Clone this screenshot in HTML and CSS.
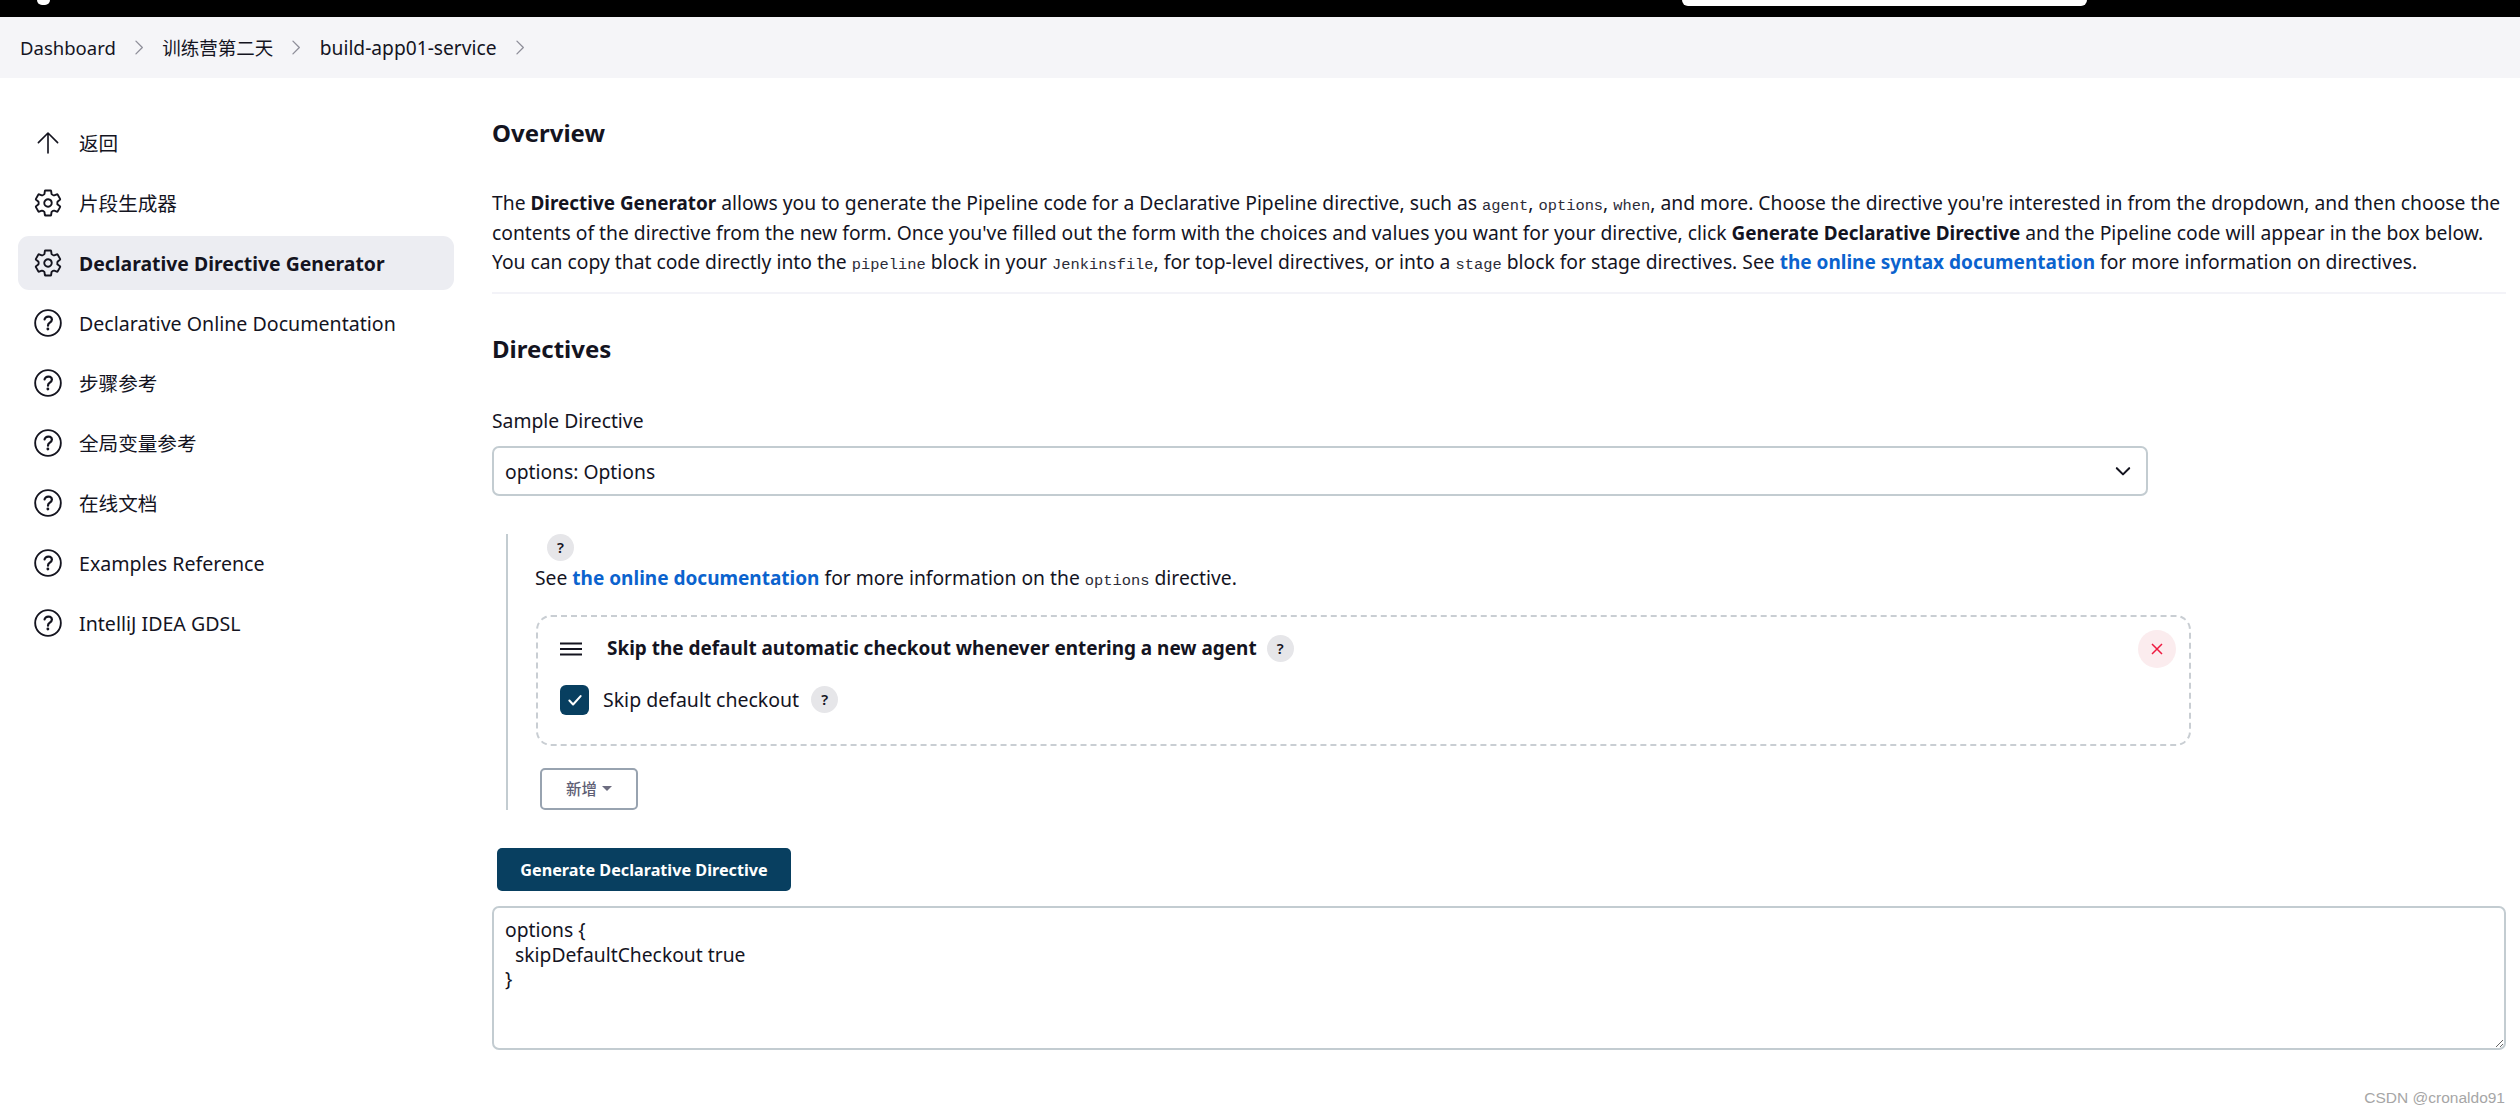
FILE: index.html
```html
<!DOCTYPE html>
<html lang="zh-CN">
<head>
<meta charset="utf-8">
<title>Declarative Directive Generator</title>
<link rel="stylesheet" href="styles.css">
</head>
<body>
<svg class="defs" width="0" height="0" aria-hidden="true">
  <symbol id="i-help" viewBox="0 0 512 512">
    <circle cx="256" cy="256" r="219" fill="none" stroke="currentColor" stroke-width="32"/>
    <g transform="translate(256 256) scale(1.12) translate(-252 -256)">
      <path d="M200 202.29s.84-17.5 19.57-32.57C230.68 160.77 244 158.18 256 158c10.93-.14 20.69 1.67 26.53 4.45 10 4.76 29.47 16.38 29.47 41.09 0 26-17 37.81-36.37 50.8S252 281.43 252 296" fill="none" stroke="currentColor" stroke-linecap="round" stroke-width="34"/>
      <circle cx="250" cy="348" r="22" fill="currentColor"/>
    </g>
  </symbol>
  <symbol id="i-gear" viewBox="0 0 512 512">
    <path fill="none" stroke="currentColor" stroke-width="32" stroke-linecap="round" stroke-linejoin="round" d="M262.29 192.31a64 64 0 1057.4 57.4 64.13 64.13 0 00-57.4-57.4zM416.39 256a154.34 154.34 0 01-1.53 20.79l45.21 35.46a10.81 10.81 0 012.45 13.75l-42.77 74a10.81 10.81 0 01-13.14 4.59l-44.9-18.08a16.11 16.11 0 00-15.17 1.75A164.48 164.48 0 01325 400.8a15.94 15.94 0 00-8.82 12.14l-6.73 47.89a11.08 11.08 0 01-10.68 9.17h-85.54a11.11 11.11 0 01-10.69-8.87l-6.72-47.82a16.07 16.07 0 00-9-12.22 155.3 155.3 0 01-21.46-12.57 16 16 0 00-15.11-1.71l-44.89 18.07a10.81 10.81 0 01-13.14-4.58l-42.77-74a10.8 10.8 0 012.45-13.75l38.21-30a16.05 16.05 0 006-14.08c-.36-4.17-.58-8.33-.58-12.5s.21-8.27.58-12.35a16 16 0 00-6.07-13.94l-38.19-30A10.81 10.81 0 0149.48 186l42.77-74a10.81 10.81 0 0113.14-4.59l44.9 18.08a16.11 16.11 0 0015.17-1.75A164.48 164.48 0 01187 111.2a15.94 15.94 0 008.82-12.14l6.73-47.89A11.08 11.08 0 01213.23 42h85.54a11.11 11.11 0 0110.69 8.87l6.72 47.82a16.07 16.07 0 009 12.22 155.3 155.3 0 0121.46 12.57 16 16 0 0015.11 1.71l44.89-18.07a10.81 10.81 0 0113.14 4.58l42.77 74a10.8 10.8 0 01-2.45 13.75l-38.21 30a16.05 16.05 0 00-6.05 14.08c.33 4.14.55 8.3.55 12.47z"/>
  </symbol>
  <symbol id="i-up" viewBox="0 0 512 512">
    <path fill="none" stroke="currentColor" stroke-width="28" stroke-linecap="round" stroke-linejoin="round" d="M92 250L256 86l164 164M256 90v336"/>
  </symbol>
  <symbol id="i-chev" viewBox="0 0 24 24">
    <path fill="none" stroke="currentColor" stroke-width="1.8" stroke-linecap="round" stroke-linejoin="round" d="M7 3l9 9-9 9"/>
  </symbol>
</svg>

<header class="topbar">
  <span class="logo-stub"></span>
  <span class="search-stub"></span>
</header>

<nav class="crumbs">
  <a class="crumb">Dashboard</a>
  <svg class="crumb-sep"><use href="#i-chev"/></svg>
  <a class="crumb">训练营第二天</a>
  <svg class="crumb-sep"><use href="#i-chev"/></svg>
  <a class="crumb crumb-job">build-app01-service</a>
  <svg class="crumb-sep"><use href="#i-chev"/></svg>
</nav>

<div class="page">
  <aside class="sidebar">
    <a class="task"><svg class="task-icon"><use href="#i-up"/></svg><span>返回</span></a>
    <a class="task"><svg class="task-icon"><use href="#i-gear"/></svg><span>片段生成器</span></a>
    <a class="task task-active"><svg class="task-icon"><use href="#i-gear"/></svg><span>Declarative Directive Generator</span></a>
    <a class="task"><svg class="task-icon"><use href="#i-help"/></svg><span>Declarative Online Documentation</span></a>
    <a class="task"><svg class="task-icon"><use href="#i-help"/></svg><span>步骤参考</span></a>
    <a class="task"><svg class="task-icon"><use href="#i-help"/></svg><span>全局变量参考</span></a>
    <a class="task"><svg class="task-icon"><use href="#i-help"/></svg><span>在线文档</span></a>
    <a class="task"><svg class="task-icon"><use href="#i-help"/></svg><span>Examples Reference</span></a>
    <a class="task"><svg class="task-icon"><use href="#i-help"/></svg><span>IntelliJ IDEA GDSL</span></a>
  </aside>

  <main class="main">
    <h2 class="heading heading-overview">Overview</h2>
    <p class="intro">
      <span class="line">The <b>Directive Generator</b> allows you to generate the Pipeline code for a Declarative Pipeline directive, such as <code>agent</code>, <code>options</code>, <code>when</code>, and more. Choose the directive you're interested in from the dropdown, and then choose the</span>
      <span class="line">contents of the directive from the new form. Once you've filled out the form with the choices and values you want for your directive, click <b>Generate Declarative Directive</b> and the Pipeline code will appear in the box below.</span>
      <span class="line">You can copy that code directly into the <code>pipeline</code> block in your <code>Jenkinsfile</code>, for top-level directives, or into a <code>stage</code> block for stage directives. See <a class="link">the online syntax documentation</a> for more information on directives.</span>
    </p>
    <hr class="rule">
    <h2 class="heading heading-directives">Directives</h2>
    <label class="field-label" for="sample">Sample Directive</label>
    <div class="select-wrap">
      <select class="select" id="sample"><option>options: Options</option></select>
      <svg class="select-chev" viewBox="0 0 16 16"><path d="M2.5 5.5L8 11l5.5-5.5" fill="none" stroke="currentColor" stroke-width="1.8" stroke-linecap="round" stroke-linejoin="round"/></svg>
    </div>

    <section class="directive">
      <span class="help help-top">?</span>
      <p class="see">See <a class="link">the online documentation</a> for more information on the <code>options</code> directive.</p>
      <div class="chunk">
        <div class="chunk-head">
          <svg class="drag" viewBox="0 0 22 14"><path d="M0 1.5h22M0 7h22M0 12.5h22" stroke="currentColor" stroke-width="2.2"/></svg>
          <b class="chunk-title">Skip the default automatic checkout whenever entering a new agent</b>
          <span class="help">?</span>
          <span class="close"><svg viewBox="0 0 12 12"><path d="M1 1l10 10M11 1L1 11" stroke="currentColor" stroke-width="1.5"/></svg></span>
        </div>
        <div class="check-row">
          <span class="check"><svg viewBox="0 0 16 16"><path d="M3 8.5l3.3 3.5L13 4.5" fill="none" stroke="currentColor" stroke-width="1.8" stroke-linecap="round" stroke-linejoin="round"/></svg></span>
          <span class="check-label">Skip default checkout</span>
          <span class="help">?</span>
        </div>
      </div>
      <button class="add" type="button">新增<span class="caret"></span></button>
    </section>

    <button class="generate" type="button">Generate Declarative Directive</button>
    <textarea class="output" spellcheck="false">options {
  skipDefaultCheckout true
}</textarea>
  </main>
</div>
<span class="watermark">CSDN @cronaldo91</span>
</body>
</html>
```

FILE: styles.css
```css
* { box-sizing: border-box; }
html, body { margin: 0; padding: 0; height: 100%; overflow: hidden; }
body {
  background: #fff;
  color: #14141f;
  font-family: "Noto Sans", "Noto Sans CJK SC", sans-serif;
  font-size: 19.3px;
  line-height: 29.3px;
  position: relative;
}
.defs { position: absolute; }

.topbar {
  height: 17px;
  background: #000;
  display: flex;
  align-items: flex-start;
  padding-left: 37px;
}
.logo-stub {
  width: 13px;
  height: 5px;
  background: #fff;
  border-radius: 0 0 6px 6px;
}
.search-stub {
  margin-left: 1632px;
  width: 405px;
  height: 6px;
  background: #fff;
  border-radius: 0 0 8px 8px;
}

.crumbs {
  height: 61px;
  background: #f5f5f8;
  display: flex;
  align-items: center;
  padding-left: 20px;
  font-size: 18.5px;
}
.crumb { color: #14141f; }
.crumb-job { font-size: 19.2px; }
.crumb-sep { width: 17px; height: 17px; margin: 0 14.5px 0 15px; color: #8e8e99; }

.page { display: flex; gap: 38px; padding-right: 14px; }

.sidebar {
  width: 436px;
  flex: none;
  margin-left: 18px;
  padding-top: 38px;
  display: flex;
  flex-direction: column;
  gap: 6px;
  font-size: 19.6px;
}
.task {
  height: 54px;
  display: flex;
  align-items: center;
  gap: 16px;
  padding-left: 15px;
  border-radius: 11px;
}
.task span { padding-top: 1px; }
.task-icon { width: 30px; height: 30px; flex: none; }
.task-active { background: #ecedf2; font-weight: 700; font-size: 19.4px; }

.main { flex: 1; min-width: 0; }
.heading { margin: 0; font-size: 24px; line-height: 30px; font-weight: 700; }
.heading-overview { margin-top: 40px; }
.heading-directives { margin-top: 40px; }
.intro { margin: 40px 0 0; line-height: 29.5px; }
.line { display: block; white-space: nowrap; }
b { font-weight: 700; font-size: 18.9px; line-height: 1; }
code {
  font-family: "Liberation Mono", monospace;
  font-size: 15.4px;
  line-height: 1;
  color: #2c2c38;
}
.link { color: #0b63ce; font-weight: 700; font-size: 19px; line-height: 1; }
.rule { margin: 15.5px 0 0; height: 2px; border: 0; background: #f3f3f8; }
.field-label { display: block; margin-top: 42px; }

.select-wrap { position: relative; width: 1656px; margin-top: 11px; }
.select {
  display: block;
  width: 100%;
  height: 50px;
  padding: 0 11px;
  appearance: none;
  background: #fff;
  border: 2px solid #c3ccd1;
  border-radius: 7px;
  color: #14141f;
  font: inherit;
}
.select-chev { position: absolute; right: 16px; top: 16px; width: 18px; height: 18px; color: #14141f; }

.directive {
  margin: 40px 0 0 14px;
  padding-left: 28px;
  border-left: 2px solid #c3ccd1;
  height: 276px;
}
.help {
  display: inline-flex;
  align-items: center;
  justify-content: center;
  width: 27px;
  height: 27px;
  border-radius: 50%;
  background: #e6e6e9;
  color: #14141f;
  font-size: 15px;
  font-weight: 600;
  line-height: 1;
  flex: none;
}
.help-top { display: flex; margin: -2px 0 0 11px; }
.see { margin: 2px 0 0 -1px; }

.chunk {
  margin-top: 22px;
  width: 1655px;
  height: 131px;
  border: 2px dashed #c9ced3;
  border-radius: 15px;
  padding: 0 20px 0 22px;
}
.chunk-head { display: flex; align-items: center; height: 38px; margin-top: 13px; position: relative; }
.drag { width: 22px; height: 14px; color: #14141f; flex: none; }
.chunk-title { margin-left: 25px; font-size: 18.96px; line-height: 29.3px; }
.chunk-head .help { margin-left: 10px; }
.close {
  margin-left: auto;
  margin-right: -7px;
  width: 38px;
  height: 38px;
  border-radius: 50%;
  background: #fbecee;
  color: #ee1a40;
  display: flex;
  align-items: center;
  justify-content: center;
}
.close svg { width: 12px; height: 12px; }

.check-row { display: flex; align-items: center; margin-top: 17px; height: 30px; }
.check {
  width: 29px;
  height: 30px;
  border-radius: 6px;
  background: #083f60;
  color: #fff;
  display: flex;
  align-items: center;
  justify-content: center;
  flex: none;
}
.check svg { width: 18px; height: 18px; }
.check-label { margin-left: 14px; font-size: 19.5px; }
.check-row .help { margin-left: 12px; }

.add {
  display: flex;
  align-items: center;
  justify-content: center;
  gap: 5px;
  margin-top: 22px;
  margin-left: 4px;
  width: 98px;
  height: 42px;
  background: #fff;
  border: 2px solid #98a3b0;
  border-radius: 5px;
  color: #5e5e74;
  font-family: inherit;
  font-size: 15.4px;
  font-weight: 500;
}
.caret {
  width: 0;
  height: 0;
  border-left: 5px solid transparent;
  border-right: 5px solid transparent;
  border-top: 5px solid #6d6d80;
}

.generate {
  display: block;
  margin: 38px 0 0 5px;
  width: 294px;
  height: 43px;
  background: #083f60;
  border: 0;
  border-radius: 5px;
  color: #fff;
  font-family: inherit;
  font-size: 16.2px;
  font-weight: 700;
}
.output {
  display: block;
  width: 100%;
  height: 144px;
  margin-top: 15px;
  padding: 10px 11px;
  border: 2px solid #c3ccd1;
  border-radius: 7px;
  background: #fff;
  color: #14141f;
  font-family: "Noto Sans", sans-serif;
  font-size: 19.3px;
  line-height: 24.4px;
  outline: none;
}

.watermark {
  position: absolute;
  right: 15px;
  bottom: 6px;
  font-family: "Liberation Sans", sans-serif;
  font-size: 15.5px;
  line-height: 20px;
  color: #a6a6a6;
}
```
